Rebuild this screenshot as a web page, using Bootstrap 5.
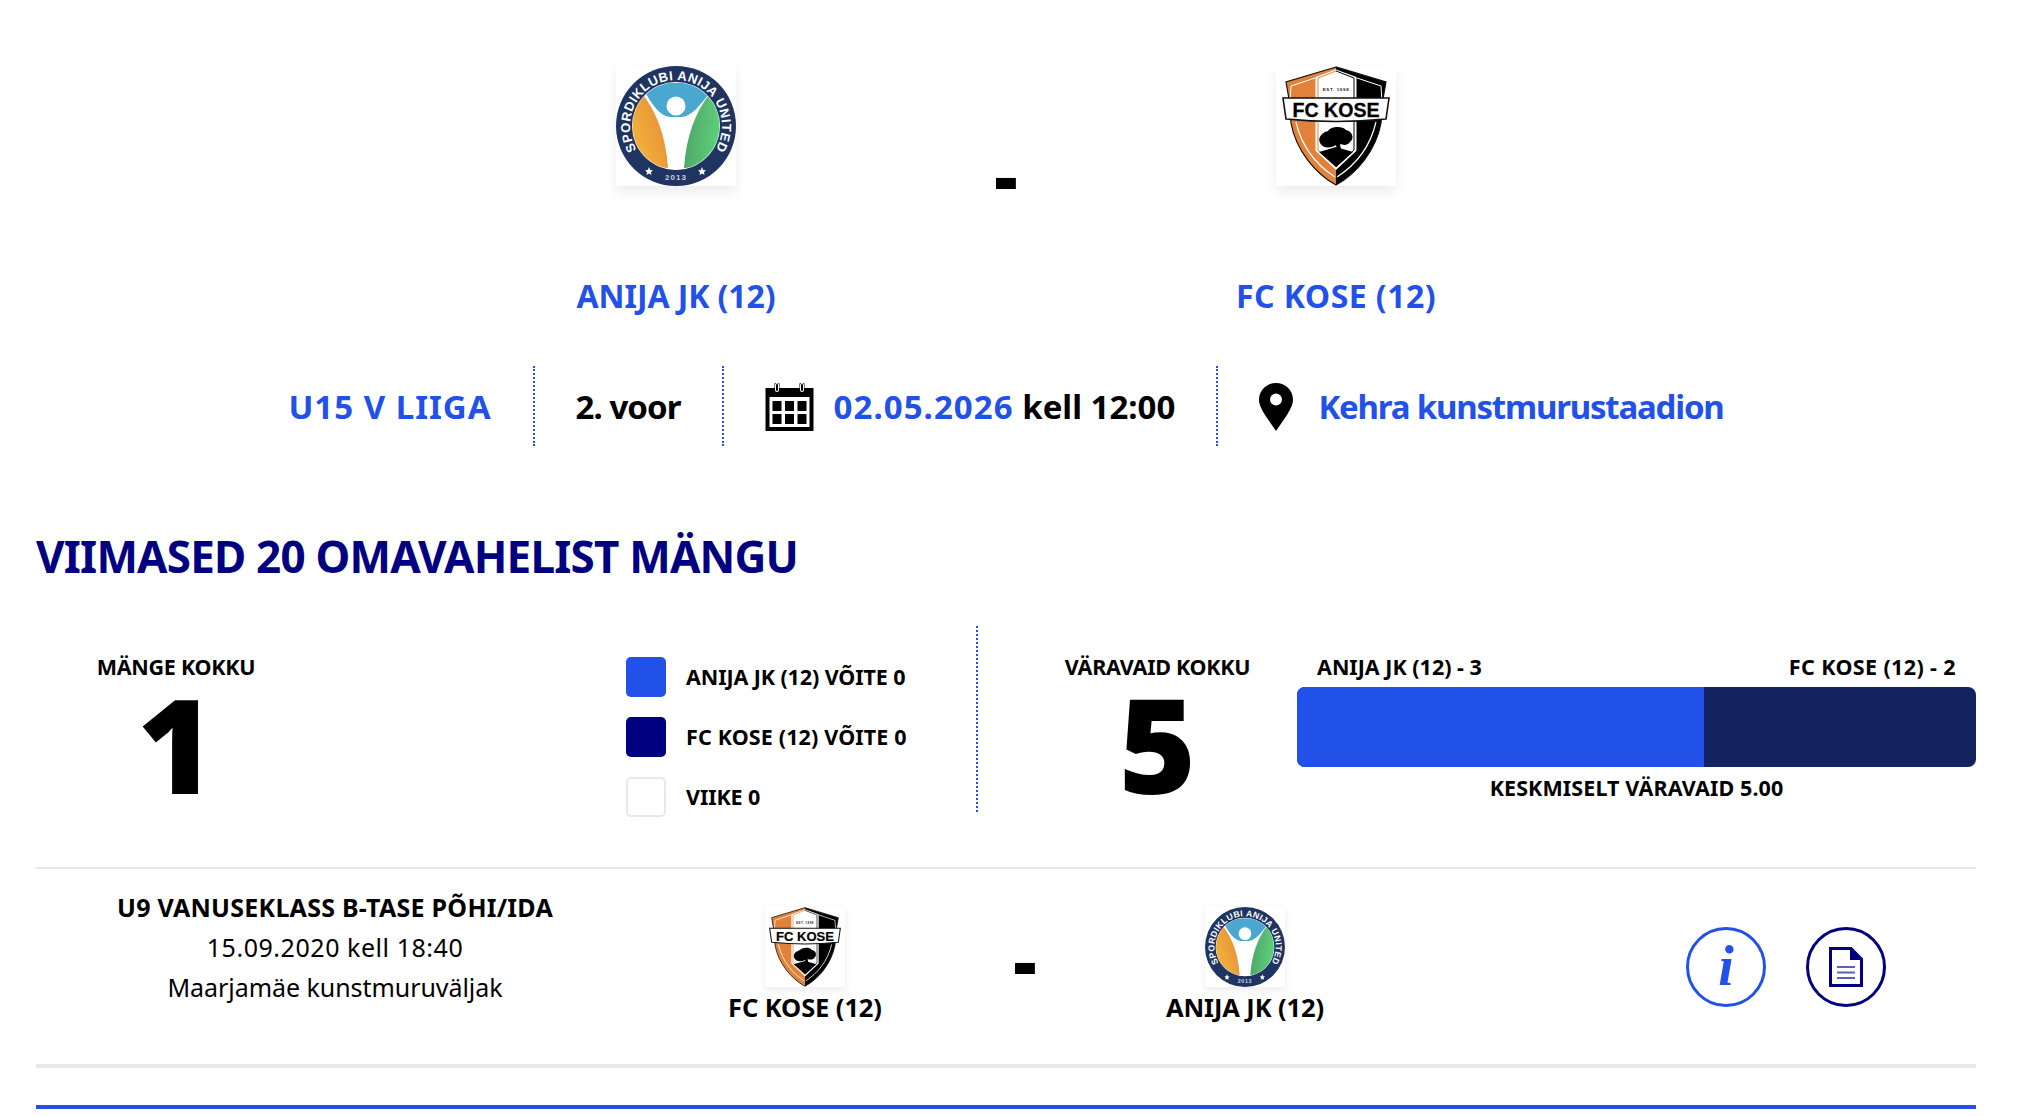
<!doctype html>
<html lang="et">
<head>
<meta charset="utf-8">
<title>Anija JK - FC Kose</title>
<link href="https://cdn.jsdelivr.net/npm/bootstrap@5.3.0/dist/css/bootstrap.min.css" rel="stylesheet">
<style>
:root{--blue:#2251e9;--navy:#000080;}
html,body{background:#fff;}
body{font-family:"Noto Sans","Open Sans",sans-serif;color:#000;font-weight:700;overflow:hidden;height:1116px;}
a{text-decoration:none;color:var(--blue);}
.page-wrap{padding:66px 52px 0 36px;}
.head-grid{display:grid;grid-template-columns:360px 300px 360px;justify-content:center;justify-items:center;}
.logo-big{width:120px;height:120px;display:block;box-shadow:0 6px 12px rgba(0,0,0,.08);}
.logo-small{width:80px;height:80px;display:block;box-shadow:0 3px 8px rgba(0,0,0,.08);}
.big-dash{font-size:72px;line-height:1;padding-top:73px;font-weight:900;}
.team-name{font-size:32px;line-height:44px;margin-top:88px;letter-spacing:-.1px;}
.team-name.fc-name{letter-spacing:.45px;}
.info-row{margin-top:48px;height:80px;font-size:33px;}
.info-cell{height:80px;padding:2px 41px 0;border-right:2px dotted var(--blue);white-space:nowrap;}
.info-cell:last-child{border-right:0;}
.sp-league{letter-spacing:1px;}
.sp-round{letter-spacing:-.95px;}
.sp-date{letter-spacing:1.05px;}
.sp-time{letter-spacing:0;}
.sp-place{letter-spacing:-1.2px;}
.cal-gap{gap:20px;}
.pin-gap{gap:25px;}
.ico-cal{width:49px;height:48px;}
.ico-pin{width:34px;height:48px;}
.section-title{color:var(--navy);font-size:44px;line-height:60px;margin:80px 0 0;font-weight:700;letter-spacing:-.8px;}
.stats{margin-top:40px;height:186px;}
.total-a{width:280px;padding:28px 20px 0;}
.lbl{font-size:21.5px;line-height:26px;letter-spacing:-.1px;white-space:nowrap;}
.sp-total{letter-spacing:-.28px;}
.sp-bar{letter-spacing:0;}
.sp-bar-fc{letter-spacing:.38px;}
.sp-legend-fc{letter-spacing:.15px;}
.sp-avg{letter-spacing:.1px;}
.huge{font-size:132px;line-height:126px;font-weight:900;}
.legend-col{margin-left:310px;width:352px;height:186px;border-right:2px dotted var(--blue);padding-top:31px;gap:20px;}
.legend-item{gap:20px;}
.sq{width:40px;height:40px;border-radius:5px;flex:none;}
.sq-a{background:var(--blue);}
.sq-b{background:var(--navy);}
.sq-c{background:#fff;border:2px solid #e6e9ec;}
.total-b{width:319px;padding:28px 0 0 40px;}
.bar-col{width:679px;padding-top:28px;}
.bar-labels{padding:0 20px;margin-bottom:7px;}
.goal-bar{height:80px;border-radius:8px;background:#13235f;}
.goal-bar .progress-bar{background:var(--blue);}
.avg{margin-top:8px;}
.match-row{margin-top:55px;border-top:2px solid #e6e9ec;border-bottom:4px solid #e6e9ec;height:201px;padding-top:15px;}
.m-meta{width:598px;text-align:center;padding-top:3px;}
.m-title{font-size:25px;line-height:40px;letter-spacing:.25px;}
.m-line{font-size:25px;line-height:40px;font-weight:400;}
.sp-l1{letter-spacing:.55px;}
.sp-l2{letter-spacing:-.05px;}
.m-team{width:300px;padding-top:23px;}
.m-team-first{margin-left:21px;}
.m-team .lbl2{font-size:25.5px;line-height:40px;letter-spacing:-.1px;white-space:nowrap;}
.m-dash{width:140px;font-size:72px;line-height:1;padding-top:40px;text-align:center;font-weight:900;}
.round-btn{width:80px;height:80px;border-radius:50%;border:3.5px solid var(--blue);background:#fff;padding:0;}
.round-btn.navy-ring{border-color:var(--navy);}
.round-gap{gap:40px;margin-left:291px;padding-top:43px;}
.blue-rule{height:4px;background:var(--blue);margin-top:37px;}
</style>
</head>
<body>
<main class="page-wrap">

  <section class="head-grid">
    <div class="d-flex flex-column align-items-center">
      <svg class="logo-big" viewBox="0 0 120 120" role="img" aria-label="Anija JK">
        <defs>
          <linearGradient id="grO" x1="0" y1="1" x2="1" y2="0.4"><stop offset="0" stop-color="#f6c23f"/><stop offset="1" stop-color="#e78f38"/></linearGradient>
          <linearGradient id="grG" x1="0" y1="0.4" x2="1" y2="0.6"><stop offset="0" stop-color="#4da468"/><stop offset="1" stop-color="#63d97e"/></linearGradient>
          <clipPath id="inCl"><circle cx="60" cy="60" r="43.5"/></clipPath>
          <path id="ringP" d="M24.8 89.6 A46 46 0 1 1 95.2 89.6"/>
          <symbol id="anijaLogo" viewBox="0 0 120 120">
            <rect width="120" height="120" fill="#fff"/>
            <circle cx="60" cy="60" r="60" fill="#1f3460"/>
            <circle cx="60" cy="60" r="44" fill="#fff"/>
            <g clip-path="url(#inCl)">
              <path d="M14 20 H106 L92 32 C84 42 76 53 66 54 H54 C44 53 36 42 28 27 Z" fill="#4aa7d0" transform="translate(0 -3)"/>
              <path d="M28 30 C40 46 50 70 52 102 L10 100 V40 Z" fill="url(#grO)"/>
              <path d="M92 30 C80 46 70 70 68 102 L110 100 V40 Z" fill="url(#grG)"/>
              <path d="M52 102 H68 V108 H52 Z" fill="#fff"/>
            </g>
            <circle cx="60" cy="40" r="9.5" fill="#fff"/>
            <text fill="#fff" font-family="Liberation Sans" font-weight="700" font-size="13" letter-spacing=".45" text-anchor="middle"><textPath href="#ringP" startOffset="50%">SPORDIKLUBI ANIJA UNITED</textPath></text>
            <text x="60" y="114" fill="#c9d1e0" font-family="Liberation Sans" font-size="8" letter-spacing="1" text-anchor="middle">2013</text>
            <polygon points="33,101 34.2,104 37,104.3 34.9,106.2 35.5,109 33,107.5 30.5,109 31.1,106.2 29,104.3 31.8,104" fill="#fff"/>
            <polygon points="86,101 87.2,104 90,104.3 87.9,106.2 88.5,109 86,107.5 83.5,109 84.1,106.2 82,104.3 84.8,104" fill="#fff"/>
          </symbol>
        </defs>
        <use href="#anijaLogo"/>
      </svg>
      <a class="team-name" href="#">ANIJA JK (12)</a>
    </div>
    <div class="big-dash">-</div>
    <div class="d-flex flex-column align-items-center">
      <svg class="logo-big" viewBox="0 0 120 120" role="img" aria-label="FC Kose">
        <defs>
          <symbol id="koseLogo" viewBox="0 0 120 120">
            <rect width="120" height="120" fill="#fff"/>
            <path d="M60 1 L10 16 L13 33 L15 57 C20 85 40 108 60 119 Z" fill="#e2813a"/>
            <path d="M60 1 L110 16 L107 33 L105 57 C100 85 80 108 60 119 Z" fill="#000"/>
            <path d="M60 1 L10 16 L13 33 L15 57 C20 85 40 108 60 119 C80 108 100 85 105 57 L107 33 L110 16 Z" fill="none" stroke="#111" stroke-width="1.2"/>
            <path d="M14 36 L15 20 L39 12 M106 36 L105 20 L81 12" fill="none" stroke="#fff" stroke-width="1"/>
            <path d="M20 56 C26 82 42 100 59 111 M100 56 C94 82 78 100 61 111" fill="none" stroke="#fff" stroke-width="1.2"/>
            <path d="M60 5 L41 12 L41 84 L60 102 L79 84 L79 12 Z" fill="#fff" stroke="#fff" stroke-width="3"/>
            <path d="M60 5 L42 12 V84 L60 101" fill="none" stroke="#e2813a" stroke-width="1"/>
            <path d="M60 5 L78 12 V84 L60 101" fill="none" stroke="#000" stroke-width="1"/>
            <path d="M43 86 L60 81 L77 86 L60 101 Z" fill="#000"/>
            <path d="M44 77 C41 70 48 66 52 65 C55 60 67 60 70 64 C76 65 79 72 74 76 C71 80 67 79 64 78 L66 89 L62 89 L60 79 C56 82 47 83 44 77 Z" fill="#000"/>
            <text x="60" y="25" fill="#222" font-family="Liberation Sans" font-size="4.4" letter-spacing=".7" font-weight="700" text-anchor="middle">EST. 1998</text>
            <path d="M7 32 H113 L110 53 Q60 58 10 53 Z" fill="#fff" stroke="#111" stroke-width="1.6"/>
            <text x="60" y="51" fill="#000" font-family="Liberation Sans" font-weight="700" font-size="19.5" text-anchor="middle" textLength="87" lengthAdjust="spacingAndGlyphs" stroke="#000" stroke-width=".3">FC KOSE</text>
          </symbol>
        </defs>
        <use href="#koseLogo"/>
      </svg>
      <a class="team-name fc-name" href="#">FC KOSE (12)</a>
    </div>
  </section>

  <section class="info-row d-flex justify-content-center">
    <div class="info-cell d-flex align-items-center"><a class="sp-league" href="#">U15 V LIIGA</a></div>
    <div class="info-cell d-flex align-items-center sp-round">2. voor</div>
    <div class="info-cell d-flex align-items-center cal-gap">
      <svg class="ico-cal" viewBox="0 0 48 48" aria-hidden="true">
        <path d="M0 5 H9 V1.5 A2.5 2.5 0 0 1 14 1.5 V5 H34 V1.5 A2.5 2.5 0 0 1 39 1.5 V5 H48 V48 H0 Z" fill="#000"/>
        <rect x="9.5" y="0" width="4" height="9" rx="2" fill="#fff"/><rect x="10.5" y="1" width="2" height="7" rx="1" fill="#000"/>
        <rect x="34.5" y="0" width="4" height="9" rx="2" fill="#fff"/><rect x="35.5" y="1" width="2" height="7" rx="1" fill="#000"/>
        <rect x="4" y="14" width="40" height="30" fill="#fff"/>
        <g fill="#000"><rect x="7" y="18" width="9" height="10"/><rect x="19.5" y="18" width="9" height="10"/><rect x="32" y="18" width="9" height="10"/><rect x="7" y="31" width="9" height="10"/><rect x="19.5" y="31" width="9" height="10"/><rect x="32" y="31" width="9" height="10"/></g>
      </svg>
      <span class="sp-time"><a class="sp-date" href="#">02.05.2026</a> kell 12:00</span>
    </div>
    <div class="info-cell d-flex align-items-center pin-gap">
      <svg class="ico-pin" viewBox="0 0 34 48" aria-hidden="true"><path fill-rule="evenodd" d="M17 0 C7.6 0 0 7.4 0 16.6 C0 22 3 27 6 32 L17 48 L28 32 C31 27 34 22 34 16.6 C34 7.4 26.4 0 17 0 Z M17 10.5 A6 6 0 1 1 17 22.5 A6 6 0 1 1 17 10.5 Z" fill="#000"/></svg>
      <a class="sp-place" href="#">Kehra kunstmurustaadion</a>
    </div>
  </section>

  <h2 class="section-title">VIIMASED 20 OMAVAHELIST MÄNGU</h2>

  <section class="stats d-flex">
    <div class="total-a text-center"><div class="lbl sp-total">MÄNGE KOKKU</div><div class="huge">1</div></div>
    <div class="legend-col d-flex flex-column">
      <div class="d-flex align-items-center legend-item lbl"><span class="sq sq-a"></span>ANIJA JK (12) VÕITE 0</div>
      <div class="d-flex align-items-center legend-item lbl sp-legend-fc"><span class="sq sq-b"></span>FC KOSE (12) VÕITE 0</div>
      <div class="d-flex align-items-center legend-item lbl"><span class="sq sq-c"></span>VIIKE 0</div>
    </div>
    <div class="total-b text-center"><div class="lbl sp-total">VÄRAVAID KOKKU</div><div class="huge">5</div></div>
    <div class="bar-col">
      <div class="d-flex justify-content-between lbl sp-bar bar-labels"><span>ANIJA JK (12) - 3</span><span class="sp-bar-fc">FC KOSE (12) - 2</span></div>
      <div class="progress goal-bar"><div class="progress-bar" style="width:60%"></div></div>
      <div class="lbl sp-avg text-center avg">KESKMISELT VÄRAVAID 5.00</div>
    </div>
  </section>

  <section class="match-row d-flex">
    <div class="m-meta">
      <div class="m-title">U9 VANUSEKLASS B-TASE PÕHI/IDA</div>
      <div class="m-line sp-l1">15.09.2020 kell 18:40</div>
      <div class="m-line sp-l2">Maarjamäe kunstmuruväljak</div>
    </div>
    <div class="m-team m-team-first d-flex flex-column align-items-center">
      <svg class="logo-small" viewBox="0 0 120 120" aria-label="FC Kose"><use href="#koseLogo"/></svg>
      <div class="lbl2">FC KOSE (12)</div>
    </div>
    <div class="m-dash">-</div>
    <div class="m-team d-flex flex-column align-items-center">
      <svg class="logo-small" viewBox="0 0 120 120" aria-label="Anija JK"><use href="#anijaLogo"/></svg>
      <div class="lbl2">ANIJA JK (12)</div>
    </div>
    <div class="d-flex round-gap">
      <button type="button" class="round-btn d-flex align-items-center justify-content-center" aria-label="Info">
        <svg width="70" height="70" viewBox="0 0 70 70" aria-hidden="true"><text x="35" y="53" fill="#2251e9" font-family="Liberation Serif" font-style="italic" font-weight="700" font-size="56" text-anchor="middle">i</text></svg>
      </button>
      <button type="button" class="round-btn navy-ring d-flex align-items-center justify-content-center" aria-label="Protokoll">
        <svg width="34" height="40" viewBox="0 0 34 40" aria-hidden="true"><path d="M1.5 1.5 H22 L32.5 12 V38.5 H1.5 Z" fill="#fff" stroke="#000080" stroke-width="3"/><path d="M21 1.5 V13 H32.5 Z" fill="#000080"/><path d="M8 20 H26 M8 25.5 H26 M8 31 H26" stroke="#5a62b5" stroke-width="2"/></svg>
      </button>
    </div>
  </section>

  <div class="blue-rule"></div>
</main>
<script src="https://cdn.jsdelivr.net/npm/bootstrap@5.3.0/dist/js/bootstrap.bundle.min.js"></script>
</body>
</html>
